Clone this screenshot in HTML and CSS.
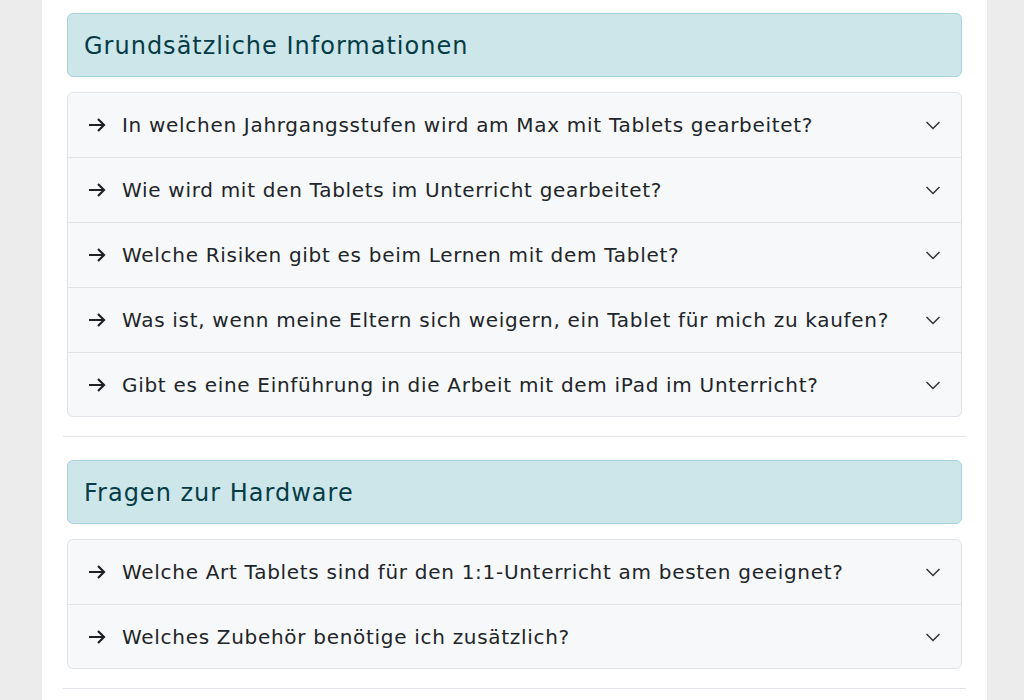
FILE: index.html
```html
<!DOCTYPE html>
<html lang="de">
<head>
<meta charset="utf-8">
<title>FAQ</title>
<link rel="stylesheet" href="styles.css">
</head>
<body>
<main class="page">
  <section class="group">
    <h2 class="group-title">Grundsätzliche Informationen</h2>
    <div class="accordion">
      <div class="item"><svg class="arrow" viewBox="0 0 18 16"><path d="M1 8h15M10 2l6 6-6 6"/></svg><span class="q">In welchen Jahrgangsstufen wird am Max mit Tablets gearbeitet?</span><svg class="chev" viewBox="0 0 16 16"><path d="M1.5 5l6.5 6.5 6.5-6.5"/></svg></div>
      <div class="item"><svg class="arrow" viewBox="0 0 18 16"><path d="M1 8h15M10 2l6 6-6 6"/></svg><span class="q">Wie wird mit den Tablets im Unterricht gearbeitet?</span><svg class="chev" viewBox="0 0 16 16"><path d="M1.5 5l6.5 6.5 6.5-6.5"/></svg></div>
      <div class="item"><svg class="arrow" viewBox="0 0 18 16"><path d="M1 8h15M10 2l6 6-6 6"/></svg><span class="q">Welche Risiken gibt es beim Lernen mit dem Tablet?</span><svg class="chev" viewBox="0 0 16 16"><path d="M1.5 5l6.5 6.5 6.5-6.5"/></svg></div>
      <div class="item"><svg class="arrow" viewBox="0 0 18 16"><path d="M1 8h15M10 2l6 6-6 6"/></svg><span class="q">Was ist, wenn meine Eltern sich weigern, ein Tablet für mich zu kaufen?</span><svg class="chev" viewBox="0 0 16 16"><path d="M1.5 5l6.5 6.5 6.5-6.5"/></svg></div>
      <div class="item"><svg class="arrow" viewBox="0 0 18 16"><path d="M1 8h15M10 2l6 6-6 6"/></svg><span class="q">Gibt es eine Einführung in die Arbeit mit dem iPad im Unterricht?</span><svg class="chev" viewBox="0 0 16 16"><path d="M1.5 5l6.5 6.5 6.5-6.5"/></svg></div>
    </div>
  </section>
  <hr class="sep">
  <section class="group">
    <h2 class="group-title">Fragen zur Hardware</h2>
    <div class="accordion">
      <div class="item"><svg class="arrow" viewBox="0 0 18 16"><path d="M1 8h15M10 2l6 6-6 6"/></svg><span class="q">Welche Art Tablets sind für den 1:1-Unterricht am besten geeignet?</span><svg class="chev" viewBox="0 0 16 16"><path d="M1.5 5l6.5 6.5 6.5-6.5"/></svg></div>
      <div class="item"><svg class="arrow" viewBox="0 0 18 16"><path d="M1 8h15M10 2l6 6-6 6"/></svg><span class="q">Welches Zubehör benötige ich zusätzlich?</span><svg class="chev" viewBox="0 0 16 16"><path d="M1.5 5l6.5 6.5 6.5-6.5"/></svg></div>
    </div>
  </section>
  <hr class="sep">
</main>
</body>
</html>
```
FILE: styles.css
```css
html, body {
  margin: 0;
  padding: 0;
  background: #ececec;
  height: 100%;
  overflow: hidden;
}
body {
  font-family: "DejaVu Sans", "Noto Sans", sans-serif;
  color: #212529;
}
.page {
  margin-left: 42px;
  width: 903px;
  min-height: 700px;
  background: #fff;
  padding: 13px 21px 0 21px;
}
.group {
  padding: 0 4px;
}
.group-title {
  margin: 0 0 15px 0;
  padding: 18px 16px 15px 16px;
  background: #cde6ea;
  border: 1px solid #a6d4dc;
  border-radius: 6px;
  color: #063c46;
  font-size: 24px;
  font-weight: 400;
  line-height: 29px;
  letter-spacing: 1px;
}
.accordion {
  border: 1px solid #e0e3e7;
  border-radius: 6px;
  background: #f7f8fa;
  overflow: hidden;
}
.item {
  display: flex;
  align-items: center;
  height: 64px;
  padding: 0 20px;
  border-top: 1px solid #e0e3e7;
  font-size: 20px;
  letter-spacing: 0.7px;
}
.item:first-child {
  border-top: none;
}
.item:last-child {
  height: 63px;
}
.arrow {
  width: 18px;
  height: 16px;
  margin-right: 16px;
  fill: none;
  stroke: #1d2125;
  stroke-width: 2.2;
  flex: none;
}
.q {
  flex: 1;
}
.chev {
  width: 16px;
  height: 16px;
  fill: none;
  stroke: #333;
  stroke-width: 1.5;
  flex: none;
}
.sep {
  margin: 19px 0 23px 0;
  border: 0;
  border-top: 1px solid #e0e3e7;
}
```
